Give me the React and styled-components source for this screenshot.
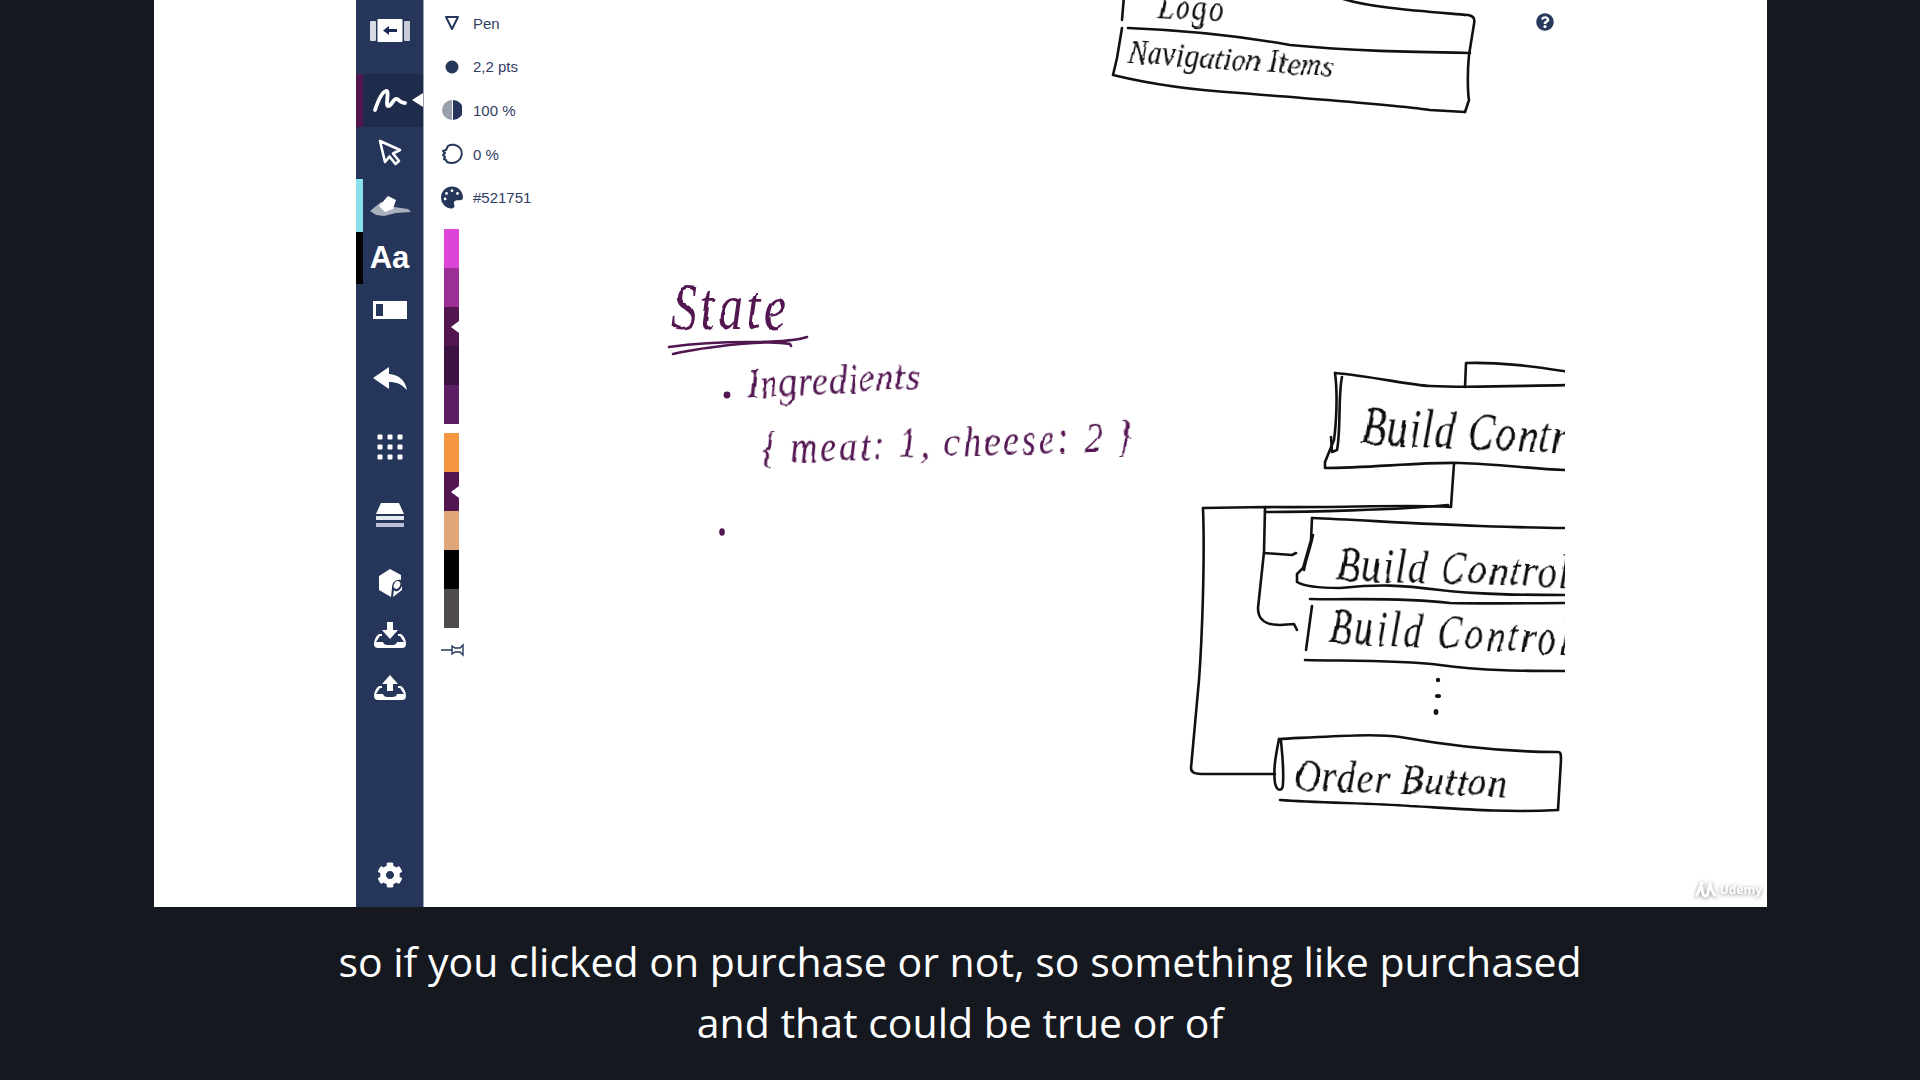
import React from 'react';
import styled, {createGlobalStyle} from 'styled-components';
import {FaCog, FaPalette, FaQuestionCircle} from 'react-icons/fa';

const GlobalStyle = createGlobalStyle`
    html, body {
        margin: 0;
        height: 100%;
        overflow: hidden;
        background: #15191f;
        font-family: "Liberation Sans", Arial, sans-serif;
    }
`;

const NAVY = '#26365a';
const INK = '#521751';

const palette = [
    [
        {color: '#dd44d8'},
        {color: '#9c2f96'},
        {color: '#521751', marked: true},
        {color: '#3b1240'},
        {color: '#5c1d63'},
    ],
    [
        {color: '#f59640'},
        {color: '#521751', marked: true},
        {color: '#e0a678'},
        {color: '#000000'},
        {color: '#4f4a4b'},
    ],
];

const strokes = [
    // top box
    'M1124 -4 L1122 20',
    'M1340 -2 C1370 8 1420 11 1468 15 C1474 16 1475 19 1474 24 L1469 55 C1467 75 1468 95 1469 100 L1465 112',
    'M1128 28 C1180 30 1240 36 1290 45 C1350 51 1410 52 1470 53',
    'M1122 28 L1117 58 L1113 75 C1150 84 1190 90 1240 93 C1310 99 1390 104 1430 110 L1465 112',
    // top Build box
    'M1465 387 L1466 363 C1500 362 1530 366 1570 372',
    'M1335 373 C1370 376 1410 385 1430 386 C1470 388 1510 386 1570 385',
    'M1335 373 C1338 395 1336 425 1334 440 L1325 462 L1325 468 C1370 468 1420 462 1460 463 C1500 464 1540 470 1570 470',
    'M1342 377 C1338 395 1341 430 1337 450 L1332 452 L1331 437',
    'M1454 464 L1452 492 L1451 507 C1420 504 1330 508 1266 507 L1203 508',
    'M1265 512 C1300 512 1400 510 1448 505',
    // tree lines
    'M1203 508 C1205 560 1202 640 1199 680 L1191 768 C1191 773 1195 774 1205 774 L1275 774',
    'M1265 508 L1264 552 L1258 608 C1258 622 1268 625 1280 625 L1294 624 L1297 630',
    'M1264 553 L1292 555 L1296 553',
    // Build box 2
    'M1312 518 C1360 520 1420 524 1480 526 C1510 527 1540 528 1570 528',
    'M1312 518 L1311 540 L1303 568 L1297 574 L1297 582 C1305 587 1325 588 1340 588 C1380 584 1400 585 1440 590 C1480 595 1530 595 1570 595',
    'M1313 535 C1310 550 1306 558 1304 570',
    // Build box 3
    'M1310 599 C1350 600 1400 597 1450 603 C1490 604 1530 603 1570 603',
    'M1312 606 L1306 650',
    'M1305 660 C1350 661 1400 660 1440 665 C1480 671 1530 671 1570 671',
    // order button box
    'M1279 739 C1320 737 1375 733 1400 737 C1440 744 1500 752 1558 752 C1561 752 1561 755 1561 760 L1558 810',
    'M1280 800 C1320 803 1370 803 1410 806 C1450 808 1500 813 1558 810',
    'M1279 739 C1276 755 1273 768 1275 783 C1277 792 1283 792 1283 783 C1284 768 1282 752 1281 741',
];

const inkStrokes = [
    'M669 347 C690 344 720 342 750 342 C770 342 795 341 807 337',
    'M673 354 C690 350 720 346 740 344 C760 342 780 342 790 344 L791 346',
];

const Stage = styled.div`
    height: 907px;
    margin: 0 153px 0 154px;
    padding-left: 202px;
    background: #ffffff;
    display: flex;
    position: relative;
`;

const Sidebar = styled.nav`
    width: 68px;
    background: ${NAVY};
    border-right: 1px solid #9aa0aa;
    box-sizing: border-box;
    display: flex;
    flex-direction: column;
    z-index: 1;
`;

const Header = styled.div`
    height: 74px;
    padding-bottom: 12px;
    box-sizing: border-box;
    display: flex;
    align-items: center;
    justify-content: center;
`;

const ToolGroup = styled.div`
    display: flex;
    flex-direction: column;
    gap: ${p => p.$gap || 0}px;
    margin-top: ${p => p.$top || 0}px;
`;

const Tool = styled.div`
    height: ${p => p.$height || 52.5}px;
    flex: none;
    position: relative;
    display: flex;
    align-items: center;
    justify-content: center;
    background: ${p => (p.$active ? '#1f2b4a' : 'transparent')};
    border-left: 7px solid ${p => p.$strip || 'transparent'};
    padding-right: 7px;
    box-sizing: border-box;

    &::after {
        content: '';
        display: ${p => (p.$active ? 'block' : 'none')};
        position: absolute;
        right: 0;
        top: 19px;
        border-top: 7px solid transparent;
        border-bottom: 7px solid transparent;
        border-right: 11px solid #ffffff;
    }
`;

const ToolLetters = styled.span`
    font: bold 31px "Liberation Sans", Arial, sans-serif;
    color: #ffffff;
    line-height: 1;
`;

const Settings = styled(Tool)`
    margin-top: auto;
    margin-bottom: 6px;
    font-size: 26px;
    color: #ffffff;
`;

const Board = styled.main`
    flex: 1;
`;

const Panel = styled.div`
    width: 120px;
    padding: 1.5px 0 0 17px;
`;

const PropRow = styled.div`
    height: 43.6px;
    display: grid;
    grid-template-columns: 22px 1fr;
    column-gap: 10px;
    align-items: center;
    font-size: 15px;
    color: #2f3d63;
`;

const PropIcon = styled.span`
    display: flex;
    align-items: center;
    justify-content: center;
    color: ${NAVY};
    font-size: 23px;
`;

const Swatches = styled.div`
    margin: 8px 0 0 3px;
    display: flex;
    flex-direction: column;
    gap: 9px;
    width: 15px;
`;

const SwatchGroup = styled.div`
    display: flex;
    flex-direction: column;
`;

const Swatch = styled.div`
    height: 39px;
    background: ${p => p.$color};
    position: relative;

    &::after {
        content: '';
        display: ${p => (p.$marked ? 'block' : 'none')};
        position: absolute;
        right: 0;
        top: 14px;
        border-top: 6px solid transparent;
        border-bottom: 6px solid transparent;
        border-right: 8px solid #ffffff;
    }
`;

const Pin = styled.div`
    margin: 14px 0 0 -1px;
    height: 16px;
`;

const Sheet = styled.div`
    position: absolute;
    left: 0;
    top: 0;
    width: 1411px;
    height: 907px;
    overflow: hidden;
`;

const SheetDrawing = styled.svg`
    position: absolute;
    left: 0;
    top: 0;
    width: 1411px;
    height: 907px;
    filter: blur(0.4px);
`;

const Hand = styled.span`
    position: absolute;
    left: ${p => p.$x - 154}px;
    top: ${p => p.$y}px;
    font-family: "Liberation Serif", serif;
    font-style: italic;
    font-size: ${p => p.$size}px;
    letter-spacing: ${p => p.$track || 0}px;
    line-height: 1;
    white-space: pre;
    color: ${p => (p.$ink ? INK : '#111111')};
    transform: rotate(${p => p.$turn || 0}deg) scaleY(${p => p.$tall || 1});
    transform-origin: left center;
    filter: url(#wobble) blur(0.3px);
`;

const Help = styled.div`
    position: absolute;
    top: 13px;
    right: 213px;
    font-size: 18px;
    line-height: 1;
    color: #2a3a5c;
    display: flex;
`;

const Watermark = styled.div`
    position: absolute;
    right: 5px;
    bottom: 9px;
    display: flex;
    align-items: center;
    gap: 3px;
    color: #ffffff;
    font: bold 12px "Open Sans", sans-serif;
    filter: drop-shadow(0 1px 2px rgba(0, 0, 0, 0.45));
`;

const Caption = styled.div`
    height: 173px;
    box-sizing: border-box;
    padding-top: 24px;
    text-align: center;
    color: #ffffff;
    font: 41px/61px "Open Sans", "Noto Sans", sans-serif;
`;

function Icon({w = 44, h = 30, children}) {
    return <svg width={w} height={h} viewBox={`0 0 ${w} ${h}`}>{children}</svg>;
}

function Tray({up}) {
    const arrow = up ? 'M18 2 L10 11 L15 11 L15 18 L21 18 L21 11 L26 11 Z' : 'M15 1 L21 1 L21 9 L26 9 L18 18 L10 9 L15 9 Z';
    return (
        <Icon h={28} w={36}>
            <path d={arrow} fill="#fff"/>
            <path d="M7 13 L10 13 L10 15 L8 15 L4 21 L11 21 C12 24 14 24 18 24 C22 24 24 24 25 21 L32 21 L28 15 L26 15 L26 13 L29 13 C32 15 34 19 34 23 C34 26 32 27 30 27 L6 27 C4 27 2 26 2 23 C2 19 4 15 7 13 Z" fill="#fff"/>
        </Icon>
    );
}

function App() {
    return (
        <>
            <GlobalStyle/>
            <svg width="0" height="0" style={{position: 'absolute'}}>
                <filter id="wobble" x="-5%" y="-20%" width="110%" height="140%">
                    <feTurbulence type="fractalNoise" baseFrequency="0.045" numOctaves="2" seed="7"/>
                    <feDisplacementMap in="SourceGraphic" scale="5"/>
                </filter>
            </svg>
            <Stage>
                <Sheet>
                    <SheetDrawing viewBox="154 0 1411 907" fill="none" stroke="#111" strokeWidth="2.6" strokeLinecap="round" strokeLinejoin="round">
                        {strokes.map(d => <path key={d} d={d}/>)}
                        <g stroke={INK}>
                            {inkStrokes.map(d => <path key={d} d={d}/>)}
                        </g>
                        <g fill={INK} stroke="none">
                            <circle cx="727" cy="395" r="3.4"/>
                            <ellipse cx="722" cy="532" rx="2.8" ry="3.8"/>
                        </g>
                        <g fill="#111" stroke="none">
                            <circle cx="1438" cy="680" r="2.2"/>
                            <ellipse cx="1438" cy="696" rx="3" ry="2"/>
                            <ellipse cx="1436" cy="712" rx="2.4" ry="3"/>
                        </g>
                    </SheetDrawing>
                    <Hand $x={1158} $y={-8} $size={29} $track={2} $turn={3} $tall={1.2}>Logo</Hand>
                    <Hand $x={1128} $y={36} $size={30} $turn={4} $tall={1.15}>Navigation Items</Hand>
                    <Hand $x={672} $y={282} $size={50} $track={3.5} $tall={1.3} $ink>State</Hand>
                    <Hand $x={747} $y={366} $size={36} $track={1} $turn={-3} $tall={1.2} $ink>Ingredients</Hand>
                    <Hand $x={762} $y={430} $size={36} $track={2.9} $turn={-2} $tall={1.25} $ink>{'{ meat: 1, cheese: 2 }'}</Hand>
                    <Hand $x={1362} $y={406} $size={40} $track={1.6} $turn={3} $tall={1.35}>Build Control</Hand>
                    <Hand $x={1337} $y={544} $size={38} $track={2} $turn={2} $tall={1.3}>Build Control</Hand>
                    <Hand $x={1330} $y={608} $size={36} $track={3.5} $turn={3} $tall={1.4}>Build Control</Hand>
                    <Hand $x={1294} $y={756} $size={38} $track={1} $turn={2} $tall={1.15}>Order Button</Hand>
                </Sheet>
                <Sidebar>
                    <Header>
                        <Icon w={44} h={26}>
                            <rect x="2" y="3" width="6" height="20" rx="1" fill="#d8dbe3"/>
                            <rect x="36" y="3" width="6" height="20" rx="1" fill="#c8ccd8"/>
                            <rect x="9.5" y="1" width="25" height="23" rx="1" fill="#fff"/>
                            <path d="M15 12.5 L21 8 L21 11 L29 11 L29 14 L21 14 L21 17 Z" fill="#1d2a55"/>
                        </Icon>
                    </Header>
                    <ToolGroup>
                        <Tool $active $strip={INK}>
                            <Icon w={36} h={26}>
                                <path d="M3 23 C6 14 10 5 14 4 C18 3 13 19 16 19 C20 19 21 11 25 12 C28 13 28 16 33 16" fill="none" stroke="#fff" strokeWidth="3.8" strokeLinecap="round" strokeLinejoin="round"/>
                            </Icon>
                        </Tool>
                        <Tool>
                            <Icon w={30} h={30}>
                                <path d="M5 3 L25 12 L18 15.5 L24 23 L20.5 26 L14.5 18.5 L10 24 Z" fill="none" stroke="#fff" strokeWidth="2.6" strokeLinejoin="round"/>
                            </Icon>
                        </Tool>
                        <Tool $strip="#8be0ee">
                            <Icon w={44} h={26}>
                                <path d="M2 19 L13 10 L26 15 L40 17 L43 20 L28 21 L16 24 L8 23 Z" fill="#a9afbd"/>
                                <path d="M11 14 L20 4 L28 8 L25 17 L17 20 Z" fill="#fff"/>
                            </Icon>
                        </Tool>
                        <Tool $strip="#000000">
                            <ToolLetters>Aa</ToolLetters>
                        </Tool>
                        <Tool>
                            <Icon w={36} h={20}>
                                <rect x="1" y="1" width="34" height="18" fill="#fff"/>
                                <rect x="4" y="4" width="7" height="12" fill="#26365a"/>
                            </Icon>
                        </Tool>
                    </ToolGroup>
                    <ToolGroup $top={16} $gap={16}>
                        <Tool $height={52}>
                            <Icon w={38} h={26}>
                                <path d="M2 12 L18 1 L18 8 C28 9 34 14 36 24 C30 18 26 16 18 16 L18 23 Z" fill="#fff"/>
                            </Icon>
                        </Tool>
                        <Tool $height={52}>
                            <Icon w={28} h={28}>
                                {[4, 14, 24].map(y => [4, 14, 24].map(x => (
                                    <rect key={`${x}-${y}`} x={x - 2.5} y={y - 2.5} width="5" height="5" rx="1" fill="#fff"/>
                                )))}
                            </Icon>
                        </Tool>
                        <Tool $height={52}>
                            <Icon w={32} h={26}>
                                <path d="M7 1 L25 1 L30 12 L2 12 Z" fill="#fff"/>
                                <rect x="2" y="14" width="28" height="4" fill="#e6e8f0"/>
                                <rect x="2" y="21" width="28" height="4" fill="#b9bfd8"/>
                            </Icon>
                        </Tool>
                        <Tool $height={52}>
                            <Icon w={28} h={30}>
                                <path d="M14 1 L25 7 L25 12 C19 11 16 15 16 20 L15 29 L3 22 L3 8 Z" fill="#fff"/>
                                <path d="M17 29 L18 22 C20 25 24 23 26 18 L26 22 Z" fill="#fff"/>
                                <ellipse cx="21" cy="17" rx="3" ry="4" transform="rotate(30 21 17)" fill="#fff"/>
                            </Icon>
                        </Tool>
                    </ToolGroup>
                    <ToolGroup>
                        <Tool><Tray/></Tool>
                        <Tool><Tray up/></Tool>
                    </ToolGroup>
                    <Settings $height={52}><FaCog/></Settings>
                </Sidebar>
                <Board>
                    <Panel>
                        <PropRow>
                            <PropIcon>
                                <svg width="16" height="16" viewBox="0 0 16 16"><path d="M2 2 L14 2 L8 14 Z" fill="none" stroke={NAVY} strokeWidth="2" strokeLinejoin="round"/></svg>
                            </PropIcon>
                            Pen
                        </PropRow>
                        <PropRow>
                            <PropIcon>
                                <svg width="14" height="14"><circle cx="7" cy="7" r="6.5" fill={NAVY}/></svg>
                            </PropIcon>
                            2,2 pts
                        </PropRow>
                        <PropRow>
                            <PropIcon>
                                <svg width="20" height="20" viewBox="0 0 20 20">
                                    <path d="M10 0 A10 10 0 0 0 10 20 Z" fill="#9aa0ae"/>
                                    <path d="M11 0 A10 10 0 0 1 11 20 Z" fill={NAVY}/>
                                </svg>
                            </PropIcon>
                            100 %
                        </PropRow>
                        <PropRow>
                            <PropIcon>
                                <svg width="22" height="22" viewBox="0 0 22 22">
                                    <path d="M7 3 C10 1 16 1 19 5 C22 9 21 15 17 18 C13 21 8 20 6 19 L5 17 L3 16 L4 14 L2 12 L4 10 L2 8 L5 7 Z" fill="none" stroke={NAVY} strokeWidth="2" strokeLinejoin="round"/>
                                </svg>
                            </PropIcon>
                            0 %
                        </PropRow>
                        <PropRow>
                            <PropIcon><FaPalette/></PropIcon>
                            #521751
                        </PropRow>
                    </Panel>
                    <Panel>
                        <Swatches>
                            {palette.map((group, i) => (
                                <SwatchGroup key={i}>
                                    {group.map((s, j) => <Swatch key={j} $color={s.color} $marked={s.marked}/>)}
                                </SwatchGroup>
                            ))}
                        </Swatches>
                        <Pin>
                            <svg width="26" height="16" viewBox="0 0 26 16" fill="none" stroke={NAVY} strokeWidth="1.4">
                                <path d="M1 8 L12 8 M12 4 L15 6 L20 6 L23 3 L23 13 L20 10 L15 10 L12 12 Z"/>
                            </svg>
                        </Pin>
                    </Panel>
                </Board>
                <Help><FaQuestionCircle/></Help>
                <Watermark>
                    <svg width="22" height="18" viewBox="0 0 22 18" fill="none" stroke="#fff" strokeWidth="3" strokeLinecap="round">
                        <path d="M2 15 L7 3 M7 8 C7 14 9 16 11 16 C14 16 13 7 15 4 C16 8 17 13 20 15"/>
                    </svg>
                    Udemy
                </Watermark>
            </Stage>
            <Caption>
                so if you clicked on purchase or not, so something like purchased<br/>
                and that could be true or of
            </Caption>
        </>
    );
}

export default App;
